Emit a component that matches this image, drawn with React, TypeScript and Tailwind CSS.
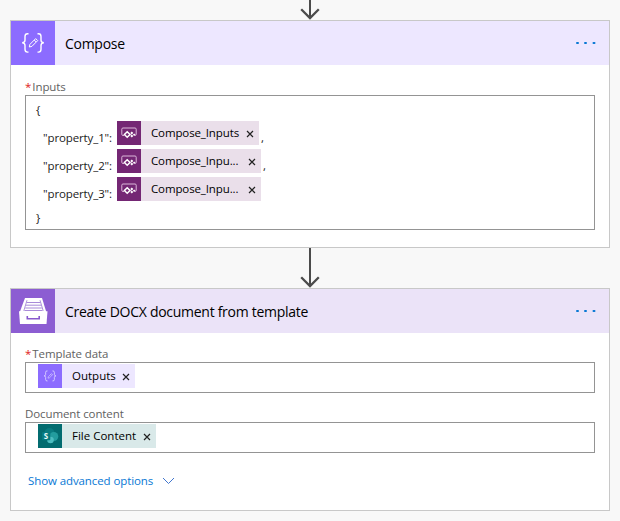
import type { ReactNode } from "react";

function ComposeIcon({ size, opacity = 1 }: { size: number; opacity?: number }) {
  return (
    <svg width={size} height={size} viewBox="0 0 44 44" fill="none" stroke="#fff" strokeWidth="1.4" opacity={opacity}>
      <path d="M17.5 12.7h-1q-2.5 0-2.5 2.7v3.8q0 2.3-2.8 2.6 2.8.3 2.8 2.7v3.8q0 2.8 2.5 2.8h1" />
      <path d="M26.5 12.7h1q2.5 0 2.5 2.7v3.8q0 2.3 2.8 2.6-2.8.3-2.8 2.7v3.8q0 2.8-2.5 2.8h-1" />
      <path d="M18.3 26l.6-2.6 5.8-5.8 2 2-5.8 5.8zM23.2 19l2 2" strokeWidth="1" />
    </svg>
  );
}

function PowerAppsIcon() {
  return (
    <svg width="24" height="24" viewBox="0 0 24 24" fill="none">
      <path d="M7 14.5H6q-1.2 0-1.2-1.2V8.2Q4.8 7 6 7h12q1.2 0 1.2 1.2v5.1q0 1.2-1.2 1.2" stroke="#dcb9da" strokeWidth="1" />
      <path d="M10.2 10.7l2.8 2.8-2.8 2.8-2.8-2.8z" stroke="#fff" strokeWidth="1.5" />
      <path d="M14.8 10.6l1.5 1.5-1.5 1.5-1.5-1.5zM14.8 13.6l1.5 1.5-1.5 1.5-1.5-1.5zM17.2 12.4l1.3 1.3-1.3 1.3-1.3-1.3z" fill="#fff" />
    </svg>
  );
}

function DrawerIcon() {
  return (
    <svg width="44" height="44" viewBox="0 0 44 44">
      <path d="M14 9h17l4.3 14H8.8z" fill="#fff" />
      <path d="M15.6 13.5h13.8M14.8 16.2h15.4M14.2 19h16.6M13.5 21.5h18" stroke="#a98bd9" strokeWidth="1" />
      <path d="M16 11.2l-3.2 10.6M29 11.2l3.2 10.6" stroke="#9b77d2" strokeWidth=".8" />
      <path d="M8 22.3h28.5l-1 12.7H9z" fill="#fff" />
      <path d="M16.3 27v2.8h11.9V27" fill="none" stroke="#8859cd" strokeWidth="1.6" />
    </svg>
  );
}

function SharePointIcon() {
  return (
    <svg width="24" height="24" viewBox="0 0 24 24">
      <circle cx="11.5" cy="9" r="5" fill="#0a7b80" />
      <circle cx="15.8" cy="12.5" r="4.5" fill="#239c9e" />
      <circle cx="12.5" cy="16" r="3.3" fill="#4dbdc0" />
      <rect x="4" y="8" width="8.3" height="8.3" rx="1" fill="#067b80" />
      <text x="8" y="15" textAnchor="middle" fill="#e7fafa" fontSize="8" fontWeight="700" fontFamily="Open Sans, sans-serif">S</text>
    </svg>
  );
}

function Arrow({ height }: { height: number }) {
  return (
    <svg className="mx-auto block" width="20" height={height} fill="none" stroke="#4b4b4b">
      <path d={`M10 0V${height - 2}`} strokeWidth="2" />
      <path d={`M1.2 ${height - 10.8}L10 ${height - 2}l8.8-8.8`} strokeWidth="2.3" />
    </svg>
  );
}

function Dots() {
  return (
    <svg className="ml-auto mr-[10px]" width="24" height="4" fill="#0878d4">
      <rect x="1" y="1" width="3" height="2" rx="1" />
      <rect x="9" y="1" width="3" height="2" rx="1" />
      <rect x="17.5" y="1" width="3" height="2" rx="1" />
    </svg>
  );
}

function Chip({ icon, tone, fill, width, label }: { icon: ReactNode; tone: string; fill: string; width: string; label: ReactNode }) {
  return (
    <span className={`flex h-6 shrink-0 items-center ${fill} ${width}`}>
      <span className={`flex size-6 shrink-0 items-center justify-center ${tone}`}>{icon}</span>
      <span className="ml-[10px] whitespace-nowrap text-black">{label}</span>
      <svg className="ml-auto mr-[5px] mt-px" width="8" height="8" stroke="#222" strokeWidth="1.2">
        <path d="M1 1l6 6M7 1L1 7" />
      </svg>
    </span>
  );
}

function Property({ name, width, label, comma }: { name: string; width: string; label: ReactNode; comma?: boolean }) {
  return (
    <div className="flex h-7 items-start">
      <span className="ml-[17px] w-[74px] whitespace-nowrap pt-[9px] leading-4 tracking-[-0.12px]">"{name}":</span>
      <Chip icon={<PowerAppsIcon />} tone="bg-[#742774]" fill="bg-[#eadfea]" width={width} label={label} />
      {comma && <span className="ml-[2px] pt-[9px] leading-4">,</span>}
    </div>
  );
}

export default function App() {
  return (
    <main className="h-[521px] w-[620px] overflow-hidden bg-[#f8f8f8] px-[10px] font-['Open_Sans','Noto_Sans',sans-serif] text-[11.5px] text-[#222]">
      <Arrow height={20} />
      <section className="h-[228px] border border-[#c8c8c8] bg-white">
        <header className="flex h-11 items-center bg-[#ede7ff]">
          <div className="size-11 bg-[#8c6cff]"><ComposeIcon size={44} /></div>
          <h2 className="ml-[10px] text-[14px] tracking-[-0.28px] text-black">Compose</h2>
          <Dots />
        </header>
        <div className="px-[14px] pt-[14px]">
          <div className="h-4 leading-4 text-[#616161]"><span className="text-[#e02020]">*</span><span className="ml-px tracking-[-0.1px]">Inputs</span></div>
          <div className="h-[135px] border border-[#949494]">
            <div className="h-[25px] pl-[10px] pt-[6px] leading-4">{"{"}</div>
            <Property name="property_1" width="w-[142px]" label={<span className="tracking-[-0.12px]">Compose_Inputs</span>} comma />
            <Property name="property_2" width="w-[144px]" label={<span className="tracking-[-0.12px]">Compose_Inpu...</span>} comma />
            <Property name="property_3" width="w-[144px]" label={<span className="tracking-[-0.12px]">Compose_Inpu...</span>} />
            <div className="pl-[10px] pt-[5px] leading-4">{"}"}</div>
          </div>
        </div>
      </section>
      <Arrow height={40} />
      <section className="h-[223px] border border-[#c8c8c8] bg-white">
        <header className="flex h-11 items-center bg-[#ebe3f8]">
          <div className="size-11 bg-[#8c5dd2]"><DrawerIcon /></div>
          <h2 className="ml-[10px] text-[14px] tracking-[-0.28px] text-black">Create DOCX document from template</h2>
          <Dots />
        </header>
        <div className="px-[14px] pt-[13px]">
          <div className="h-4 leading-4 text-[#616161]"><span className="text-[#e02020]">*</span><span className="ml-px tracking-[-0.1px]">Template data</span></div>
          <div className="h-[31px] border border-[#949494] pl-3 pt-px">
            <Chip icon={<ComposeIcon size={24} opacity={0.8} />} tone="bg-[#8c6cff]" fill="bg-[#ede7ff]" width="w-[97px]" label="Outputs" />
          </div>
          <div className="mt-[13px] h-4 leading-4 tracking-[-0.1px] text-[#616161]">Document content</div>
          <div className="h-[31px] border border-[#949494] pl-3 pt-px">
            <Chip icon={<SharePointIcon />} tone="bg-[#036c70]" fill="bg-[#d9e9e9]" width="w-[118px]" label="File Content" />
          </div>
          <div className="mt-5 flex h-4 items-center pl-[3px] leading-4 text-[#0878d4]">
            <span className="tracking-[-0.1px]">Show advanced options</span>
            <svg className="ml-[9px]" width="13" height="8" fill="none" stroke="#4176ce"><path d="M1 1l5.5 5.5L12 1" /></svg>
          </div>
        </div>
      </section>
    </main>
  );
}
